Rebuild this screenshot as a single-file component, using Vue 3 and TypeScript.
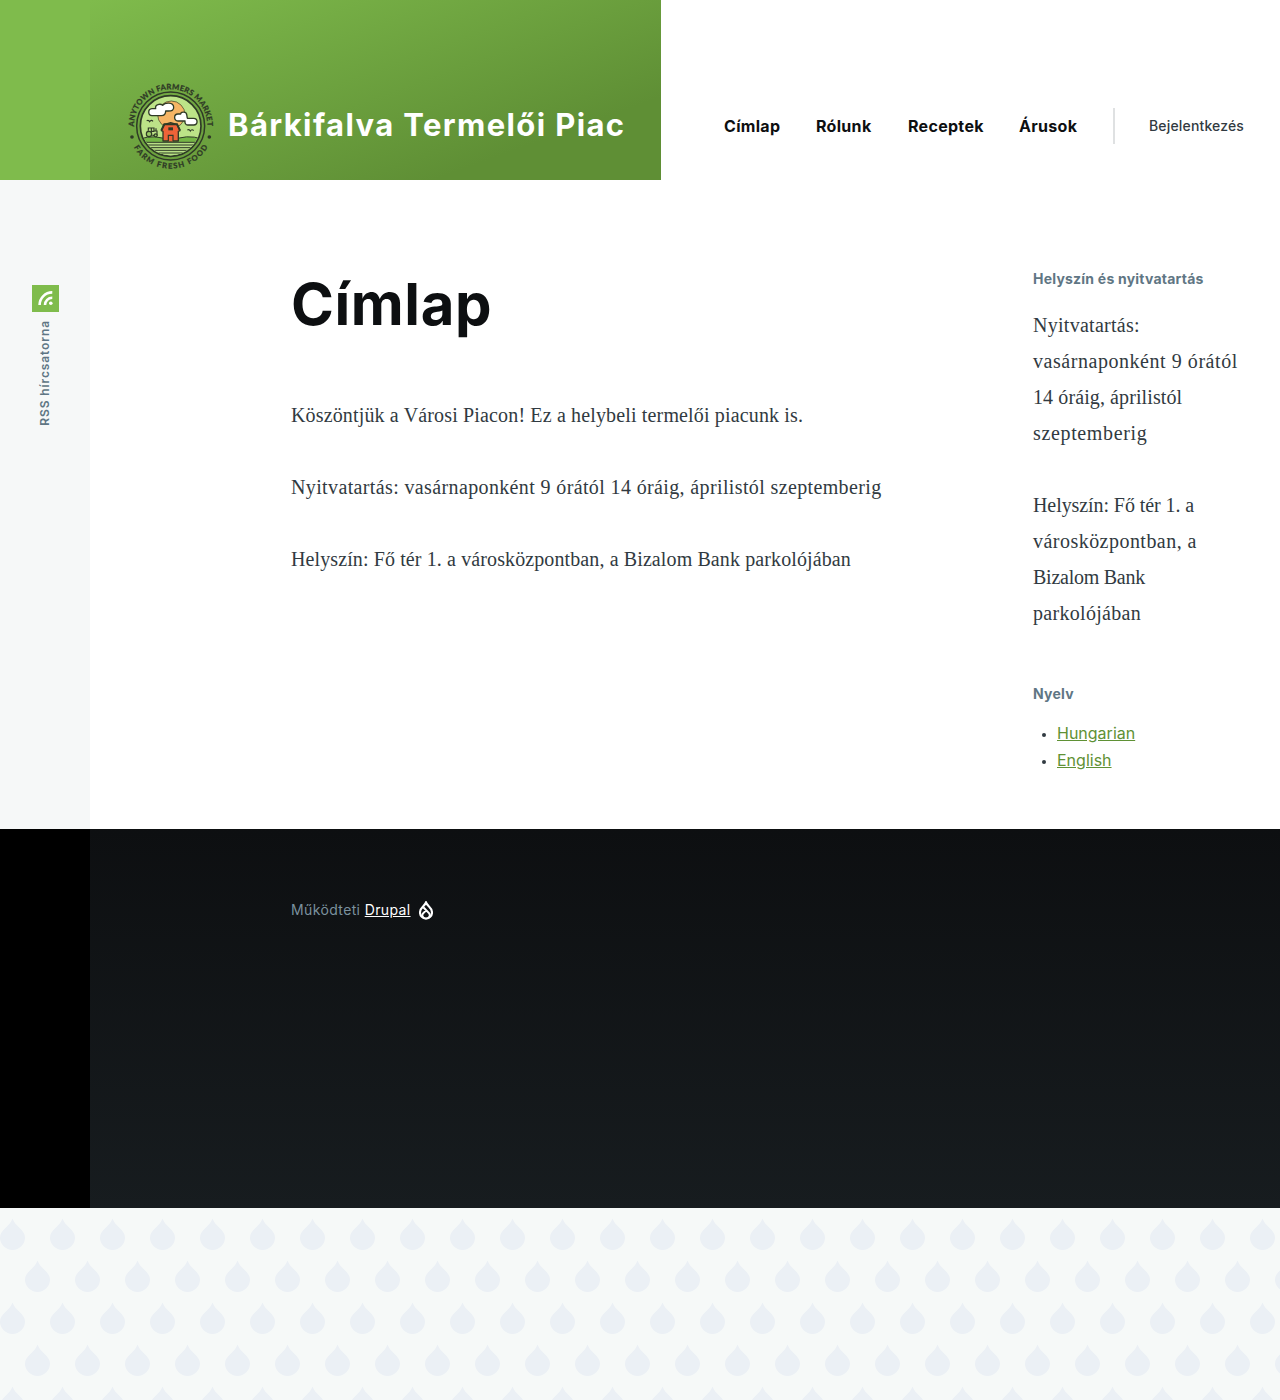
<script setup lang="ts">
interface Line {
  text: string
  tracking: number
}

const menu: string[] = ['Címlap', 'Rólunk', 'Receptek', 'Árusok']

const paragraphs: Line[] = [
  { text: 'Köszöntjük a Városi Piacon! Ez a helybeli termelői piacunk is.', tracking: 0.15 },
  { text: 'Nyitvatartás: vasárnaponként 9 órától 14 óráig, áprilistól szeptemberig', tracking: 0.37 },
  { text: 'Helyszín: Fő tér 1. a városközpontban, a Bizalom Bank parkolójában', tracking: 0.11 },
]

const visitLines: Line[][] = [
  [
    { text: 'Nyitvatartás:', tracking: 0.27 },
    { text: 'vasárnaponként 9 órától', tracking: 0.55 },
    { text: '14 óráig, áprilistól', tracking: 0.1 },
    { text: 'szeptemberig', tracking: 0.65 },
  ],
  [
    { text: 'Helyszín: Fő tér 1. a', tracking: -0.08 },
    { text: 'városközpontban, a', tracking: 0.47 },
    { text: 'Bizalom Bank', tracking: -0.25 },
    { text: 'parkolójában', tracking: 0.3 },
  ],
]

const languages: string[] = ['Hungarian', 'English']
</script>

<template>
  <div class="page">
    <header class="header">
      <div class="corner"></div>
      <div class="branding">
        <svg class="logo" viewBox="21 21 264 264" aria-hidden="true">
          <defs>
            <path id="arc-top" d="M42 156 V153 A110 110 0 0 1 262 153 V180" />
            <path id="arc-bottom" d="M24 153 A128 128 0 0 0 280 153" />
            <clipPath id="scene"><circle cx="152" cy="153" r="88" /></clipPath>
          </defs>
          <g class="ring-text">
            <text textLength="348" lengthAdjust="spacing"><textPath href="#arc-top" startOffset="1">ANYTOWN FARMERS MARKET</textPath></text>
            <text textLength="270" lengthAdjust="spacing"><textPath href="#arc-bottom" startOffset="67">FARM FRESH FOOD</textPath></text>
          </g>
          <circle cx="36" cy="186" r="5.5" fill="#2f3a26" />
          <circle cx="268" cy="186" r="5.5" fill="#2f3a26" />
          <circle cx="152" cy="153" r="102" fill="none" stroke="#2f3a26" stroke-width="4.5" />
          <circle cx="152" cy="153" r="91" fill="#bde388" stroke="#2f3a26" stroke-width="5" />
          <g clip-path="url(#scene)">
            <circle cx="154" cy="119" r="41" fill="#f6b565" stroke="#2f3a26" stroke-width="2" />
            <path d="M60 192 Q105 176 152 198 Q200 176 246 192 V250 H60z" fill="#75b646" stroke="#2f3a26" stroke-width="3" />
            <path d="M60 201 H246 V250 H60z" fill="#b8df86" />
            <path d="M60 202H246M60 210H246M60 218H246M60 226H246M60 234H246" stroke="#2f3a26" stroke-width="3" />
          </g>
          <g fill="#fff" stroke="#2f3a26" stroke-width="4" stroke-linejoin="round">
            <path d="M96 122 C84 122 82 102 96 101 H107 C104 88 121 85 128 91 C135 82 160 81 161 96 C162 107 154 108 145 108 H137 C137 116 132 122 124 122z" />
            <path d="M174 138 C160 138 161 117 174 117 H182 C183 108 200 110 200 119 C202 124 200 128 203 130 H221 C234 130 235 150 221 150 H203 C197 150 194 144 195 138z" />
          </g>
          <path d="M124 167 L132 149 L152 143 L172 149 L180 167 L175 169 V198 H129 V169z" fill="#ee6338" stroke="#2f3a26" stroke-width="4" stroke-linejoin="round" />
          <path d="M124 166 L133 148 H171 L180 166" fill="none" stroke="#2f3a26" stroke-width="6" />
          <path d="M145 157H159V166H145z" fill="#2f3a26" />
          <path d="M145 199V181H159V199" fill="#ee6338" stroke="#2f3a26" stroke-width="3.5" />
          <g fill="none" stroke="#2f3a26" stroke-width="3.5">
            <path d="M85 167V159H102V168H111V181H97M85 168L80 173M94 160V169H103M108 167V160" />
            <circle cx="87" cy="177" r="8" fill="#9acb65" />
            <circle cx="107" cy="181" r="4.5" fill="#9acb65" />
            <path d="M80 137Q86 134 89 140Q94 133 99 139M202 165Q208 162 211 168Q216 161 221 167" />
          </g>
        </svg>
        <a class="site-name">Bárkifalva Termelői Piac</a>
      </div>
      <nav class="nav">
        <a v-for="(item, i) in menu" :key="item" :class="['nav-link', 'nav-' + i]">{{ item }}</a>
        <span class="divider"></span>
        <a class="login">Bejelentkezés</a>
      </nav>
    </header>

    <div class="middle">
      <aside class="rail">
        <a class="rss">
          <svg class="rss-icon" width="27" height="27" viewBox="0 0 27 27" aria-hidden="true">
            <rect width="27" height="27" fill="#7fbc4c" />
            <path d="M7.6 20A12.6 12.6 0 0 1 20.3 7.4M13 20A7.2 7.2 0 0 1 20.3 12.8" fill="none" stroke="#fff" stroke-width="2.6" />
            <circle cx="18.8" cy="18.3" r="1.8" fill="#fff" />
          </svg>
          <span class="rss-label">RSS hírcsatorna</span>
        </a>
      </aside>
      <main class="content">
        <h1>Címlap</h1>
        <p v-for="line in paragraphs" :key="line.text" :style="{ letterSpacing: line.tracking + 'px' }">{{ line.text }}</p>
      </main>
      <aside class="sidebar">
        <h2 class="visit-title">Helyszín és nyitvatartás</h2>
        <p v-for="(lines, i) in visitLines" :key="i">
          <span v-for="line in lines" :key="line.text" :style="{ letterSpacing: line.tracking + 'px' }">{{ line.text }}</span>
        </p>
        <h2 class="lang-title">Nyelv</h2>
        <ul>
          <li v-for="language in languages" :key="language"><a>{{ language }}</a></li>
        </ul>
      </aside>
    </div>

    <footer class="footer">
      <div class="footer-rail"></div>
      <div class="footer-main">
        <span class="powered">Működteti <a>Drupal</a></span>
        <svg class="drop" width="14" height="19" viewBox="0 0 14 19" aria-hidden="true">
          <path d="M7 1.5C7.6 3 8.8 4.2 10 5.4C11.7 7 13 8.7 13 11.6A6 6 0 0 1 1 11.6C1 8.7 2.3 7 4 5.4C5.2 4.2 6.4 3 7 1.5z" fill="none" stroke="#fff" stroke-width="2.1" />
          <path d="M4.3 6.2L10.2 12.4A3.3 3.3 0 0 1 9.4 17M7.2 9.2L3.9 12.6A3 3 0 0 0 4.8 17" fill="none" stroke="#fff" stroke-width="2" />
        </svg>
      </div>
    </footer>

    <div class="drops">
      <svg width="1280" height="192" aria-hidden="true">
        <defs>
          <pattern id="raindrops" width="50" height="84" patternUnits="userSpaceOnUse">
            <g fill="#ebf0f5">
              <path id="raindrop" d="M12.5 10.5C13.6 14.2 16.4 16.8 19.3 19.8C22.6 23 25 25.8 25 29.5A12.5 12.5 0 0 1 0 29.5C0 25.8 2.4 23 5.7 19.8C8.6 16.8 11.4 14.2 12.5 10.5z" />
              <use href="#raindrop" x="25" y="42" />
            </g>
          </pattern>
        </defs>
        <rect width="1280" height="192" fill="url(#raindrops)" />
      </svg>
    </div>
  </div>
</template>

<style>
body { margin: 0; background: #f6f9f8; }
</style>

<style scoped>
.page { width: 1280px; height: 1400px; overflow: hidden; display: flex; flex-direction: column; font-family: Inter, "Open Sans", sans-serif; color: #313a41; }
.header { display: flex; height: 180px; background: #fff; }
.corner { width: 90px; background: #7fbb4c; }
.branding { display: flex; box-sizing: border-box; width: 571px; padding: 82px 0 0 37px; background: linear-gradient(160deg, #7fbb4c 0%, #5f8f35 78.66%); }
.logo { width: 88px; height: 88px; flex: none; overflow: visible; }
.ring-text { font: 900 23px Lato, sans-serif; fill: #2f3a26; stroke: #2f3a26; stroke-width: .6px; }
.site-name { margin: 23px 0 0 13px; font-size: 31px; font-weight: 700; line-height: 40px; letter-spacing: 1.38px; color: #fff; white-space: nowrap; }
.nav { flex: 1; display: flex; align-items: center; height: 36px; margin-top: 108px; padding-left: 63px; white-space: nowrap; }
.nav-link { font-size: 16px; font-weight: 700; letter-spacing: .3px; color: #0d0f11; margin-right: 36px; }
.nav-0 { width: 56px; }
.nav-1 { width: 56px; }
.nav-2 { width: 75px; }
.nav-3 { width: 58px; }
.divider { width: 2px; height: 36px; background: #dfe1e2; margin-right: 34px; }
.login { margin-bottom: 2px; font-size: 14px; font-weight: 500; letter-spacing: .16px; color: #313a41; }
.middle { display: flex; height: 649px; background: #fff; }
.rail { width: 90px; background: #f6f8f8; }
.rss { display: flex; flex-direction: column; align-items: center; padding-top: 105px; }
.rss-label { writing-mode: vertical-rl; transform: rotate(180deg); margin-top: 8px; font-size: 12px; line-height: 18px; font-weight: 600; letter-spacing: .88px; color: #5f7684; }
.content { width: 742px; padding-left: 201px; flex: none; }
h1 { margin: 88px 0 57px; font-size: 58px; line-height: 72px; font-weight: 700; letter-spacing: .6px; color: #0d0f11; }
.content p, .sidebar p { margin: 0 0 36px; font-family: "Liberation Serif", serif; font-size: 20px; line-height: 36px; white-space: nowrap; }
.sidebar { padding-top: 90px; width: 247px; flex: none; }
h2 { margin: 0; font-size: 14px; line-height: 18px; font-weight: 700; letter-spacing: .22px; color: #5f7684; white-space: nowrap; }
.visit-title { margin-bottom: 19px; }
.sidebar p span { display: block; }
.lang-title { margin-top: 54px; }
ul { margin: 17px 0 0; padding-left: 24px; font-size: 16px; line-height: 27px; }
li::marker { font-size: 13px; }
li a { color: #5f9135; text-decoration: underline; }
.footer { display: flex; height: 379px; }
.footer-rail { width: 90px; background: #000; }
.footer-main { flex: 1; display: flex; align-items: flex-start; padding: 72px 0 0 201px; background: linear-gradient(180deg, #0d0f11, #171c1f); }
.powered { font-size: 14px; line-height: 18px; letter-spacing: .37px; color: #7b919e; }
.powered a { color: #fff; text-decoration: underline; }
.drop { margin-left: 8px; }
.drops { height: 192px; }
.drops svg { display: block; }
</style>
